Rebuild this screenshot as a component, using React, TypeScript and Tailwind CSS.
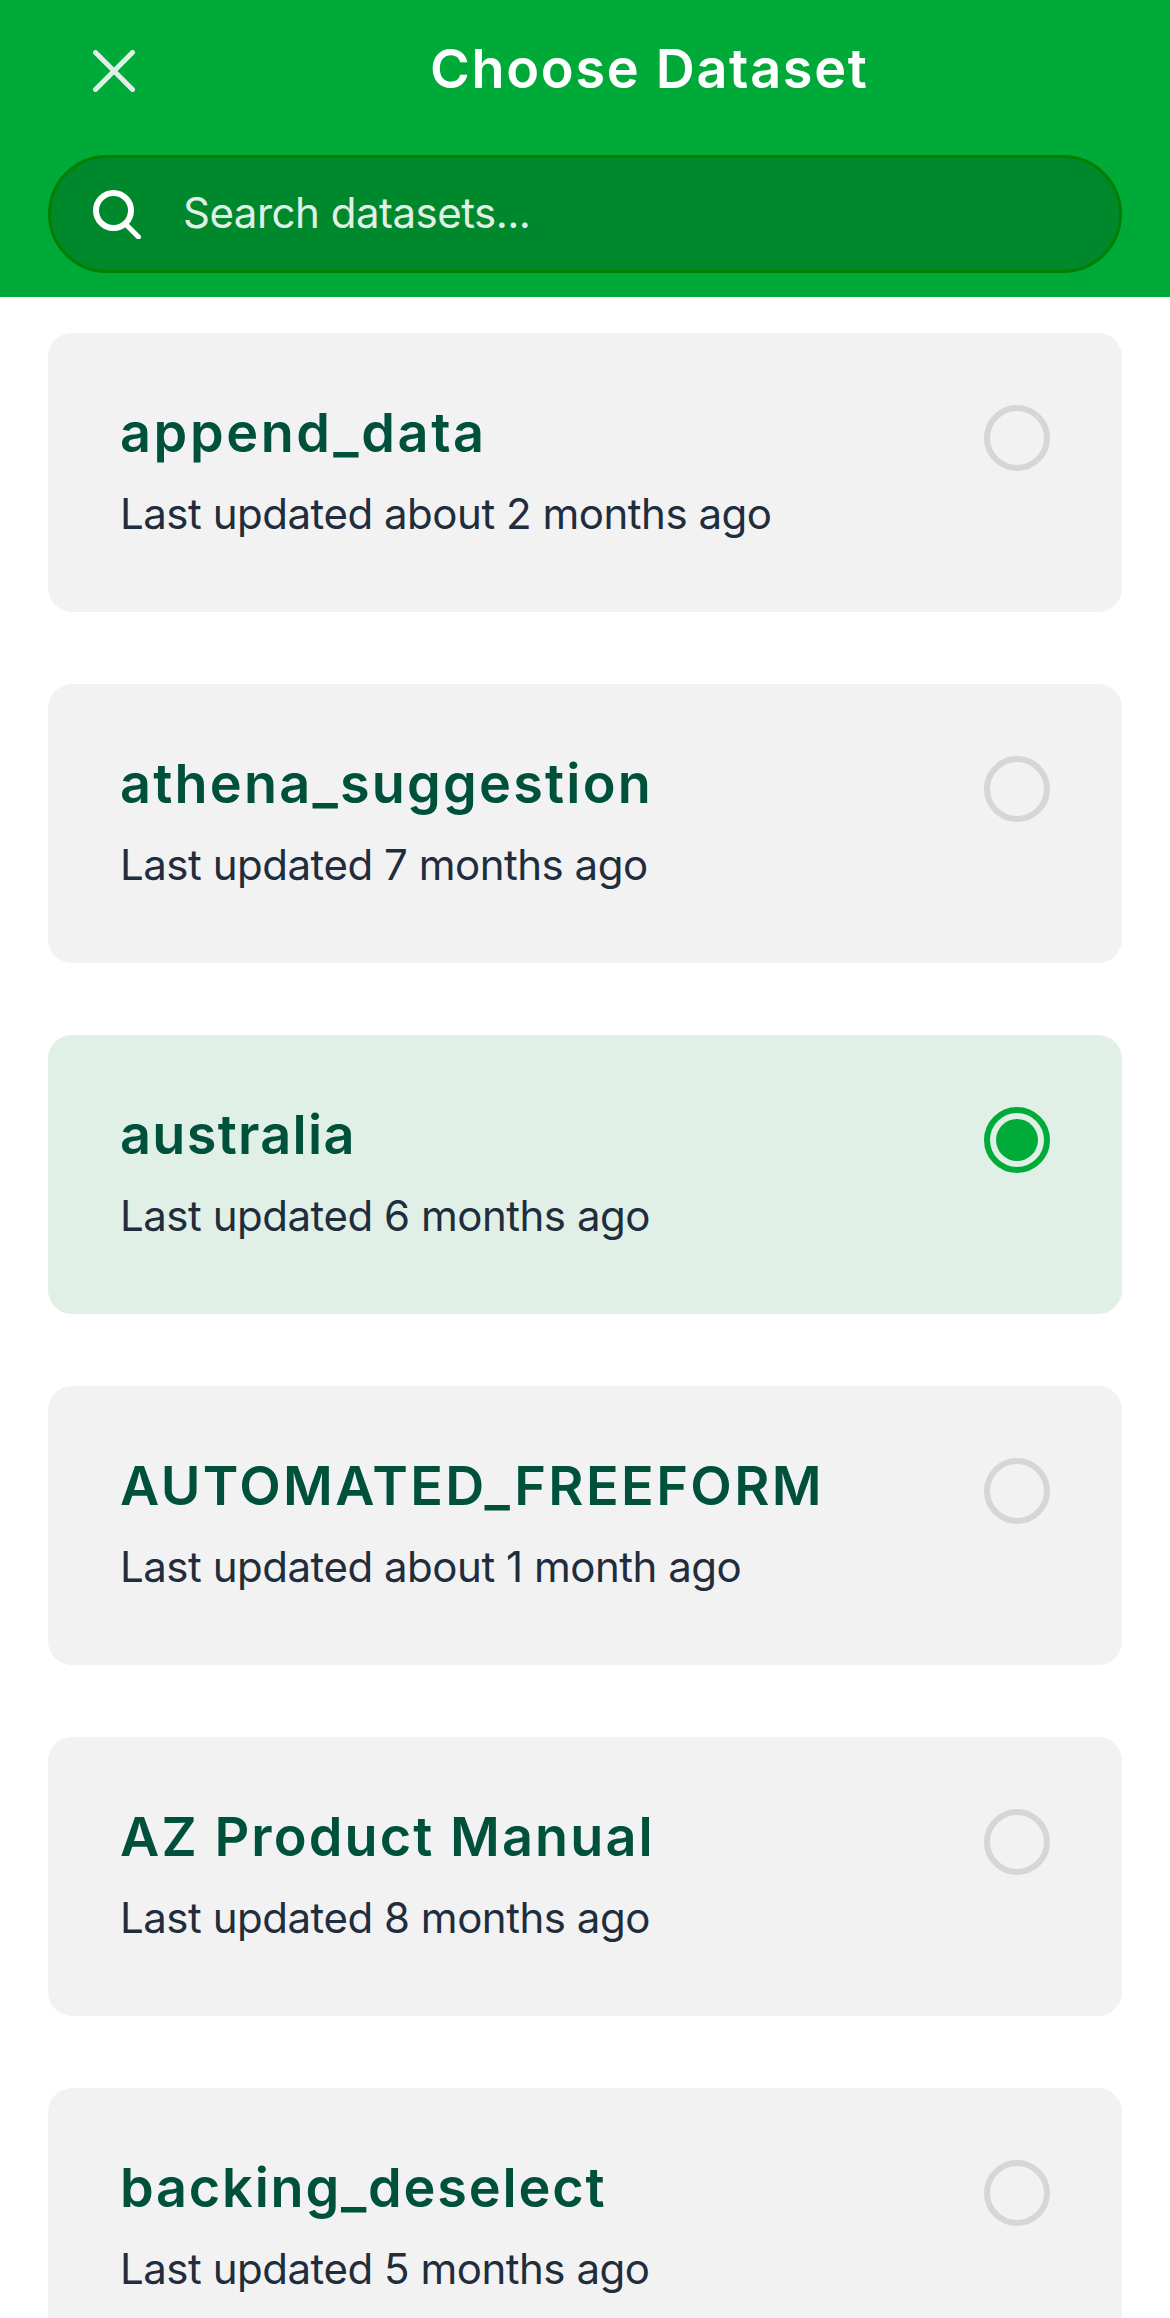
const items = [
  { name: "append_data", sub: "Last updated about 2 months ago", track: "tracking-[2.6px]" },
  { name: "athena_suggestion", sub: "Last updated 7 months ago", track: "tracking-[2.2px]" },
  { name: "australia", sub: "Last updated 6 months ago", track: "tracking-[1.3px]", selected: true },
  { name: "AUTOMATED_FREEFORM", sub: "Last updated about 1 month ago", track: "tracking-[2.4px]" },
  { name: "AZ Product Manual", sub: "Last updated 8 months ago", track: "tracking-[2.1px]" },
  { name: "backing_deselect", sub: "Last updated 5 months ago", track: "tracking-[1.8px]" },
];

function CloseIcon() {
  return (
    <svg width="42" height="42" viewBox="0 0 42 42" fill="none" stroke="#e0f0e6" strokeWidth="5" strokeLinecap="round" className="mt-[4px] shrink-0">
      <path d="M2.5 2.5 39.5 39.5M39.5 2.5 2.5 39.5" />
    </svg>
  );
}

function SearchIcon() {
  return (
    <svg width="50" height="50" viewBox="0 0 50 50" fill="none" stroke="#ffffff" strokeLinecap="round" className="shrink-0">
      <circle cx="20.5" cy="21.5" r="17.5" strokeWidth="6" />
      <path d="M33.5 36 45.5 48" strokeWidth="5" />
    </svg>
  );
}

function Radio({ selected }: { selected?: boolean }) {
  return selected ? (
    <div className="flex h-[66px] w-[66px] shrink-0 items-center justify-center rounded-full border-[6px] border-[#00ab39]">
      <div className="h-[42px] w-[42px] rounded-full bg-[#00ab39]" />
    </div>
  ) : (
    <div className="h-[66px] w-[66px] shrink-0 rounded-full border-[6px] border-[#d6d6d6]" />
  );
}

export default function App() {
  return (
    <div className="h-[2318px] w-[1170px] overflow-hidden bg-white font-['Inter',sans-serif]">
      <header className="h-[297px] bg-[#00aa39] px-[48px] pt-[33px]">
        <div className="flex h-[72px] items-center pl-[45px]">
          <CloseIcon />
          <h1 className="ml-[295px] text-[54px] leading-[72px] font-semibold tracking-[1.7px] whitespace-nowrap text-white">Choose Dataset</h1>
        </div>
        <div className="mt-[50px] flex h-[118px] items-center rounded-full border-[3px] border-[#007f00] bg-[#00882c] pl-[42px]">
          <SearchIcon />
          <span className="mt-[-2px] ml-[40px] text-[42px] leading-[60px] tracking-[-0.5px] text-[#e0f0e6]">Search datasets...</span>
        </div>
      </header>
      <main className="flex flex-col gap-[72px] px-[48px] pt-[36px]">
        {items.map((item) => (
          <div
            key={item.name}
            className={`flex h-[279px] shrink-0 items-start justify-between rounded-[24px] pt-[64px] pr-[72px] pl-[72px] ${item.selected ? "bg-[#e0f0e6]" : "bg-[#f2f2f2]"}`}
          >
            <div>
              <div className={`text-[54px] leading-[72px] font-semibold whitespace-nowrap text-[#00513b] ${item.track}`}>{item.name}</div>
              <div className="mt-[15px] text-[42px] leading-[60px] tracking-[-0.48px] text-[#1f2d3d]">{item.sub}</div>
            </div>
            <div className="mt-[8px]">
              <Radio selected={item.selected} />
            </div>
          </div>
        ))}
      </main>
    </div>
  );
}
